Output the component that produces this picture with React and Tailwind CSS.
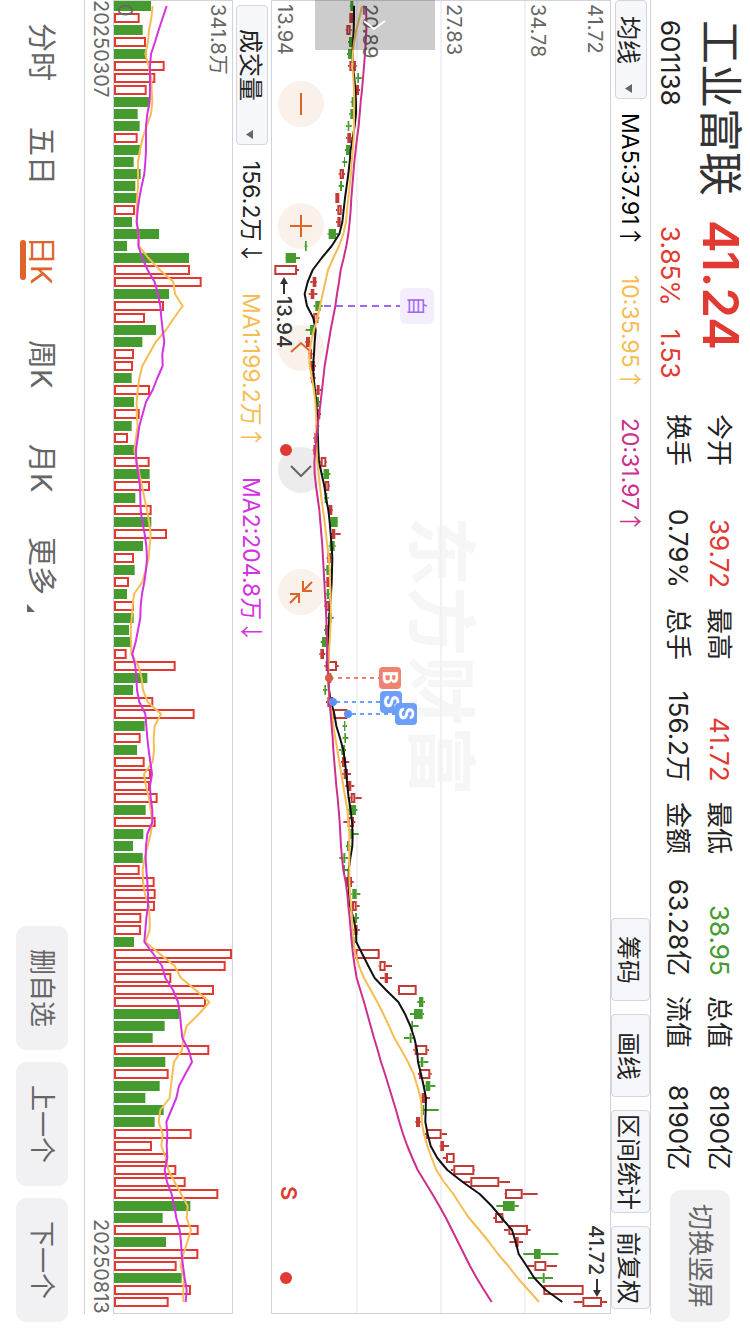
const SLOT = 12
const CHART_LENGTH = 1312

// [direction, low, body start, body end, high] in thirds of a pixel from the price origin
const PRICE_ORIGIN = 516
const CANDLES = [
  ['g', 749, 751, 760, 763], ['r', 748, 748, 760, 760], ['r', 737, 739, 752, 755], ['g', 744, 747, 757, 760],
  ['g', 741, 744, 755, 758], ['r', 744, 748, 768, 770], ['g', 768, 772, 777, 785], ['r', 765, 768, 777, 780],
  ['g', 752, 755, 768, 770], ['g', 748, 751, 759, 762], ['g', 738, 743, 748, 755], ['r', 738, 742, 753, 755],
  ['g', 735, 738, 750, 752], ['g', 727, 732, 735, 742], ['r', 716, 719, 732, 735], ['g', 716, 720, 726, 732],
  ['r', 706, 706, 718, 718], ['r', 708, 712, 725, 727], ['r', 708, 712, 722, 724], ['g', 683, 686, 708, 715],
  ['g', 614, 615, 620, 622], ['g', 556, 557, 588, 600], ['r', 522, 523, 591, 597], ['r', 631, 638, 649, 651],
  ['r', 626, 632, 643, 652], ['g', 641, 646, 662, 668], ['r', 638, 640, 655, 658], ['g', 617, 630, 645, 648],
  ['r', 616, 618, 630, 635], ['r', 624, 626, 636, 638], ['r', 627, 630, 645, 648], ['r', 631, 633, 644, 647],
  ['r', 648, 650, 659, 666], ['g', 646, 648, 657, 660], ['r', 650, 652, 660, 663], ['g', 646, 648, 656, 658],
  ['r', 640, 643, 654, 656], ['r', 638, 640, 654, 656], ['r', 655, 662, 679, 681], ['g', 664, 671, 687, 691],
  ['r', 670, 674, 688, 690], ['g', 672, 674, 682, 686], ['r', 683, 686, 697, 699], ['g', 688, 691, 713, 714],
  ['r', 692, 696, 706, 722], ['g', 686, 689, 704, 707], ['r', 680, 682, 693, 695], ['g', 674, 679, 687, 692],
  ['r', 676, 679, 690, 692], ['g', 678, 680, 687, 690], ['r', 673, 675, 688, 692], ['g', 680, 684, 695, 701],
  ['g', 672, 675, 684, 686], ['g', 662, 666, 678, 680], ['r', 658, 661, 672, 676], ['r', 673, 677, 711, 716],
  ['g', 680, 684, 694, 700], ['g', 669, 673, 678, 682], ['r', 678, 682, 700, 704], ['r', 692, 698, 742, 750],
  ['g', 728, 732, 736, 741], ['g', 728, 733, 738, 745], ['g', 717, 724, 735, 738], ['r', 723, 726, 738, 748],
  ['r', 726, 731, 744, 753], ['r', 736, 743, 754, 763], ['r', 747, 752, 766, 785], ['g', 742, 746, 768, 772],
  ['r', 730, 743, 762, 766], ['g', 748, 751, 760, 776], ['g', 738, 741, 748, 752], ['g', 718, 730, 736, 745],
  ['g', 728, 730, 735, 745], ['r', 735, 738, 756, 761], ['g', 754, 757, 770, 781], ['r', 746, 756, 770, 779],
  ['g', 760, 765, 771, 777], ['r', 755, 763, 773, 779], ['g', 754, 757, 764, 768], ['r', 764, 766, 839, 840],
  ['r', 836, 838, 857, 876], ['r', 840, 854, 864, 876], ['r', 893, 894, 950, 951], ['g', 952, 957, 970, 975],
  ['g', 930, 942, 968, 972], ['g', 930, 934, 939, 956], ['g', 912, 929, 935, 944], ['r', 940, 944, 982, 987],
  ['g', 957, 962, 970, 985], ['r', 954, 957, 991, 995], ['g', 972, 977, 991, 1006], ['r', 962, 965, 976, 990],
  ['g', 965, 968, 972, 1016], ['r', 946, 948, 960, 962], ['r', 975, 978, 1025, 1041], ['r', 1019, 1021, 1032, 1047],
  ['r', 1028, 1038, 1064, 1065], ['r', 1053, 1060, 1123, 1125], ['r', 1087, 1111, 1198, 1230], ['r', 1214, 1215, 1268, 1313],
  ['g', 1189, 1209, 1244, 1256], ['r', 1180, 1185, 1210, 1212], ['r', 1212, 1225, 1284, 1292], ['r', 1228, 1246, 1256, 1269],
  ['g', 1270, 1302, 1322, 1375], ['r', 1282, 1303, 1339, 1371], ['g', 1284, 1328, 1334, 1359], ['r', 1329, 1330, 1451, 1451],
  ['r', 1421, 1447, 1506, 1521],
]

const MA5 = [
  762, 762, 761, 759, 757, 758, 763, 766, 768, 768, 764, 758, 752, 749, 745, 740, 735, 731, 727, 718, 695, 665, 638,
  623, 614, 621, 640, 647, 644, 642, 639, 641, 645, 649, 651, 652, 654, 655, 657, 665, 673, 678, 685, 689, 692, 695,
  697, 696, 695, 693, 690, 688, 686, 684, 682, 683, 685, 687, 693, 703, 709, 720, 730, 735, 739, 742, 746, 752, 756,
  758, 757, 751, 746, 746, 747, 750, 760, 768, 769, 787, 805, 824, 858, 895, 915, 931, 943, 951, 954, 963, 971, 978,
  977, 976, 983, 992, 1012, 1042, 1088, 1139, 1175, 1205, 1236, 1247, 1256, 1280, 1303, 1337, 1387,
]
const MA10 = [
  786, 778, 769, 762, 758, 757, 760, 762, 763, 762, 762, 761, 758, 755, 753, 749, 745, 741, 738, 730, 717, 700, 684,
  676, 668, 660, 652, 642, 633, 628, 629, 636, 642, 646, 648, 649, 649, 650, 652, 656, 660, 664, 669, 674, 678, 682,
  687, 689, 690, 692, 692, 692, 691, 689, 687, 686, 685, 686, 689, 696, 700, 706, 712, 718, 724, 730, 736, 742, 745,
  748, 748, 748, 748, 748, 750, 753, 756, 758, 761, 766, 777, 792, 812, 832, 850, 867, 883, 904, 924, 941, 952, 962,
  965, 965, 972, 982, 995, 1009, 1032, 1060, 1083, 1107, 1138, 1167, 1194, 1225, 1253, 1285, 1317,
]
const MA20 = [
  798, 799, 799, 797, 795, 792, 789, 786, 782, 779, 776, 771, 767, 763, 760, 757, 754, 752, 749, 745, 739, 731, 722,
  717, 711, 706, 699, 692, 686, 680, 674, 670, 666, 662, 657, 653, 649, 646, 643, 644, 648, 653, 658, 661, 664, 667,
  669, 671, 673, 675, 677, 679, 680, 681, 682, 683, 685, 687, 689, 692, 695, 698, 700, 703, 706, 709, 713, 716, 719,
  721, 723, 726, 730, 737, 742, 745, 749, 752, 755, 759, 764, 770, 781, 792, 802, 812, 822, 833, 843, 855, 866, 877,
  888, 898, 909, 922, 937, 953, 975, 997, 1018, 1038, 1056, 1074, 1092, 1110, 1130, 1152, 1175,
]

const VOLUME_ORIGIN = 42
const VOLUMES = [
  153, 119, 128, 138, 140, 194, 166, 140, 150, 113, 119, 113, 121, 101, 122, 106, 112, 105, 96, 177, 81, 267, 270,
  305, 207, 192, 135, 168, 127, 102, 99, 95, 150, 102, 119, 95, 84, 106, 149, 149, 150, 106, 155, 154, 201, 129, 102,
  104, 87, 81, 102, 101, 87, 93, 80, 227, 142, 99, 160, 284, 134, 122, 111, 134, 153, 150, 173, 137, 167, 130, 99,
  128, 119, 164, 167, 165, 124, 123, 102, 396, 377, 214, 342, 318, 238, 194, 158, 328, 196, 206, 179, 136, 191, 164,
  275, 156, 201, 229, 257, 355, 271, 188, 296, 198, 295, 230, 245, 273, 206,
]
const VOLUME_MA1 = [
  158, 154, 147, 144, 136, 146, 154, 155, 157, 153, 140, 128, 120, 114, 114, 114, 111, 110, 110, 116, 117, 145, 180,
  220, 225, 248, 222, 198, 167, 147, 127, 118, 113, 110, 110, 113, 108, 103, 111, 118, 126, 133, 141, 147, 152, 149,
  146, 137, 127, 102, 98, 95, 92, 93, 94, 115, 125, 129, 143, 183, 164, 161, 162, 158, 132, 138, 147, 152, 157, 152,
  143, 134, 128, 129, 135, 147, 149, 149, 136, 180, 224, 243, 287, 328, 297, 260, 250, 246, 222, 217, 213, 209, 181,
  176, 188, 184, 198, 205, 224, 243, 263, 260, 273, 262, 250, 242, 252, 250, 250,
]
const VOLUME_MA2 = [
  200, 188, 176, 165, 153, 150, 150, 150, 149, 142, 138, 138, 138, 136, 133, 125, 118, 113, 110, 116, 115, 127, 143,
  164, 174, 181, 184, 188, 193, 187, 188, 172, 158, 138, 128, 118, 113, 108, 109, 115, 120, 121, 122, 127, 134, 139,
  141, 138, 133, 126, 122, 121, 114, 107, 97, 106, 109, 111, 118, 136, 139, 142, 146, 151, 156, 150, 152, 157, 157,
  142, 138, 137, 139, 142, 144, 144, 139, 136, 133, 160, 186, 196, 219, 234, 240, 243, 247, 266, 276, 256, 237, 229,
  214, 199, 202, 200, 202, 194, 201, 215, 223, 229, 239, 243, 245, 249, 254, 260, 257,
]
const GREEN_VOLUMES = new Set([
  0, 2, 4, 8, 9, 10, 12, 13, 14, 15, 16, 18, 19, 20, 21, 24, 27, 28, 31, 33, 35, 37, 39, 41, 43, 45, 47, 49, 51, 52,
  53, 56, 57, 60, 62, 67, 69, 70, 71, 78, 84, 85, 86, 88, 90, 91, 92, 93, 100, 101, 103, 106,
])

const slotCenter = (i) => 5 + i * SLOT
const scale = (value, origin) => (value - origin) / 3
const linePoints = (values, origin) => values.map((v, i) => `${scale(v, origin)},${slotCenter(i)}`).join(' ')

function Line({ values, origin, color }) {
  return <polyline points={linePoints(values, origin)} fill="none" stroke={color} strokeWidth="2" strokeLinejoin="round" />
}

function Candle({ candle, index }) {
  const [direction, low, start, end, high] = candle
  const y = slotCenter(index)
  const [l, s, e, h] = [low, start, end, high].map((v) => scale(v, PRICE_ORIGIN))
  const color = direction === 'g' ? '#459b2d' : '#c23b36'
  return (
    <g stroke={color} strokeWidth="2">
      <path d={`M${l} ${y}H${s}M${e} ${y}H${h}`} />
      {direction === 'g' ? (
        <rect x={s} y={y - 5} width={e - s} height="10" fill={color} stroke="none" />
      ) : (
        <rect x={s + 1} y={y - 4} width={Math.max(e - s - 2, 1)} height="8" fill="none" />
      )}
    </g>
  )
}

const ICONS = {
  缩小: <path d="M23 12V34" />,
  放大: <path d="M23 12V34M12 23H34" />,
  左移: <path d="M13 27L23 18L33 27" />,
  右移: <path d="M13 19L23 29L33 19" />,
  收起: <path d="M34 13L25 22M25 12V22H34M12 34L21 25M12 25H21V34" />,
}

function ToolButton({ label, muted }) {
  return (
    <button
      aria-label={label}
      className={`size-[46px] rounded-full ${muted ? 'bg-[#ececec] text-[#666666]' : 'bg-[#fbf1eb] text-[#dd6529]'}`}
    >
      <svg viewBox="0 0 46 46" className="size-full" fill="none" stroke="currentColor" strokeWidth="2">
        {ICONS[label]}
      </svg>
    </button>
  )
}

function Caret() {
  return (
    <svg viewBox="0 0 7 9" className="h-[9px] w-[7px]" fill="#666666">
      <path d="M7 0V9L0 4.500Z" />
    </svg>
  )
}

function Arrow({ children }) {
  return <span className="font-['Noto_Sans_CJK_SC',sans-serif]">{children}</span>
}

function Quote({ label, value, tone }) {
  return (
    <div className="flex justify-between">
      <dt>{label}</dt>
      <dd className={tone}>{value}</dd>
    </div>
  )
}

const QUOTES = [
  [['今开', '39.72', 'text-[#e03a32]'], ['换手', '0.79%', '']],
  [['最高', '41.72', 'text-[#e03a32]'], ['总手', '156.2万', '']],
  [['最低', '38.95', 'text-[#459b2d]'], ['金额', '63.28亿', '']],
  [['总值', '8190亿', ''], ['流值', '8190亿', '']],
]

function Header() {
  return (
    <header className="flex w-[99px] shrink-0 pb-3 pt-5">
      <div className="flex h-[394px] shrink-0 flex-col">
        <div className="flex w-[60px] items-center gap-6">
          <h1 className="text-[44px] leading-none text-[#333333]">工业富联</h1>
          <strong className="text-[49px] font-semibold leading-none text-[#e03a32]">41.24</strong>
        </div>
        <div className="flex w-[39px] items-center pr-[2px] text-[26px] leading-none text-[#e03a32]">
          <span className="h-[206px] text-[#222222]">601138</span>
          <span className="h-[103px]">3.85%</span>
          <span>1.53</span>
        </div>
      </div>
      <div className="flex flex-1 gap-5">
        {QUOTES.map((rows) => (
          <dl key={rows[0][0]} className="flex flex-1 flex-col gap-[15px] pr-[18px] text-[26px] leading-none text-[#222222]">
            {rows.map(([label, value, tone]) => (
              <Quote key={label} label={label} value={value} tone={tone} />
            ))}
          </dl>
        ))}
      </div>
      <button className="mr-5 mt-5 h-[132px] w-[60px] rounded-[10px] bg-[#f1f1f4] text-[26px] leading-none text-[#666666]">
        切换竖屏
      </button>
    </header>
  )
}

const smallButton = 'rounded-[4px] border border-[#d5d5dc] bg-[#f6f7fa] pr-[5px] text-2xl leading-none text-[#222222]'

function PriceToolbar() {
  return (
    <div className="flex w-10 shrink-0 items-center border-r border-[#d2d2da] pb-[5px] text-[23px] leading-none">
      <button className={`${smallButton} flex h-[99px] w-8 items-center justify-between pb-[5px] pt-[15px]`}>
        均线
        <Caret />
      </button>
      <span className="mt-[14px] h-[162px] text-black">MA5:37.91<Arrow>↑</Arrow></span>
      <span className="h-[143px] text-[#f5bd54]">10:35.95<Arrow>↑</Arrow></span>
      <span className="text-[#cc2f8c]">20:31.97<Arrow>↑</Arrow></span>
      <div className="mt-auto flex gap-[13px] self-stretch">
        <button className={`${smallButton} h-[83px]`}>筹码</button>
        <button className={`${smallButton} h-[83px]`}>画线</button>
        <button className={`${smallButton} h-[103px]`}>区间统计</button>
        <button className={`${smallButton} h-[83px]`}>前复权</button>
      </div>
    </div>
  )
}

const badge = 'absolute flex size-[22px] items-center justify-center rounded-[4px] text-xl font-bold leading-none text-white'

function PriceChart() {
  return (
    <section aria-label="日K线" className="relative min-w-0 flex-1 border border-[#d2d2da]">
      <div className="absolute left-[133px] top-[515px] text-[70px] font-bold leading-none text-[#f6f6f7]">东方财富</div>
      <div className="absolute left-[6px] top-[80px] flex gap-[76px]">
        <ToolButton label="缩小" />
        <ToolButton label="放大" />
        <ToolButton label="左移" />
        <ToolButton label="右移" muted />
        <ToolButton label="收起" />
      </div>
      <svg
        viewBox={`0 0 338 ${CHART_LENGTH}`}
        preserveAspectRatio="none"
        className="pointer-events-none absolute inset-0 size-full"
      >
        <path d="M85 0V1312M169 0V1312M253 0V1312" stroke="#f0f0f5" strokeWidth="2" />
        {CANDLES.map((candle, i) => (
          <Candle key={i} candle={candle} index={i} />
        ))}
        <Line values={MA5} origin={PRICE_ORIGIN} color="#111111" />
        <Line values={MA10} origin={PRICE_ORIGIN} color="#f5bd54" />
        <Line values={MA20} origin={PRICE_ORIGIN} color="#cc2f8c" />
        <path d="M52 305H128" stroke="#a066f5" strokeWidth="2" strokeDasharray="7 5" />
        <path d="M66 677H107" stroke="#ef7d6c" strokeWidth="2" strokeDasharray="4 4" />
        <path d="M64 701H108M80 713H123" stroke="#6d9ffa" strokeWidth="2" strokeDasharray="4 4" />
        <circle cx="57" cy="677" r="4" fill="#dd5a44" />
        <circle cx="61" cy="701" r="4" fill="#5c92f7" />
        <circle cx="76" cy="713" r="4" fill="#5c92f7" />
        <circle cx="14" cy="449" r="6" fill="#e03a32" />
        <circle cx="14" cy="1277" r="6" fill="#e03a32" />
        <path d="M12 293V280M325 1278V1290" stroke="#333333" strokeWidth="2" />
        <path d="M12 276L8 283H16ZM325 1296L321 1289H329Z" fill="#333333" />
      </svg>
      <div className="absolute left-0 top-[295px] text-xl font-medium leading-6 text-[#333333]">13.94</div>
      <div className="absolute left-[312px] top-[1224px] text-xl font-medium leading-6 text-[#333333]">41.72</div>
      <div className="absolute left-[5px] top-[1185px] text-[22px] font-semibold leading-6 text-[#e03a32]">S</div>
      <div className="absolute left-[128px] top-[287px] flex h-9 w-[34px] items-center justify-center rounded-[6px] bg-[#f3edfe] pr-[2px] text-xl leading-none text-[#a066f5]">
        自
      </div>
      <div className={`${badge} left-[107px] top-[666px] bg-[#f08272]`}>B</div>
      <div className={`${badge} left-[108px] top-[690px] bg-[#6d9ffa]`}>S</div>
      <div className={`${badge} left-[123px] top-[702px] bg-[#6d9ffa]`}>S</div>
      <div className="text-xl leading-6 text-[#666666]">
        <span className="absolute left-[1px] top-[3px]">13.94</span>
        <span className="absolute left-[86px] top-[3px]">20.89</span>
        <span className="absolute left-[170px] top-[3px]">27.83</span>
        <span className="absolute left-[254px] top-[3px]">34.78</span>
        <span className="absolute left-[311px] top-[3px]">41.72</span>
      </div>
      <button aria-label="展开" className="absolute -top-px left-[43px] h-[50px] w-[120px] bg-black/20">
        <svg viewBox="0 0 120 50" className="size-full" fill="none" stroke="#ffffff" strokeWidth="2">
          <path d="M49 21L59 29L70 21" />
        </svg>
      </button>
    </section>
  )
}

function VolumeToolbar() {
  return (
    <div className="flex w-[38px] shrink-0 items-center text-[23px] leading-none">
      <button className={`${smallButton} mt-[5px] flex h-[140px] w-8 items-center justify-between pb-[5px] pt-[23px]`}>
        成交量
        <Caret />
      </button>
      <span className="mt-4 h-[132px] pr-[2px] text-[#222222]">156.2万<Arrow>↓</Arrow></span>
      <span className="h-[184px] pr-[2px] text-[#f5bd54]">MA1:199.2万<Arrow>↑</Arrow></span>
      <span className="pr-[2px] text-[#d234e0]">MA2:204.8万<Arrow>↓</Arrow></span>
    </div>
  )
}

function VolumeChart() {
  return (
    <section aria-label="成交量" className="relative w-[120px] shrink-0 border border-[#d2d2da]">
      <svg viewBox={`0 0 118 ${CHART_LENGTH}`} preserveAspectRatio="none" className="absolute inset-0 size-full">
        {VOLUMES.map((value, i) => {
          const length = scale(value, VOLUME_ORIGIN)
          return GREEN_VOLUMES.has(i) ? (
            <rect key={i} x="0" y={slotCenter(i) - 5} width={length} height="10" fill="#459b2d" />
          ) : (
            <rect
              key={i}
              x="1"
              y={slotCenter(i) - 4}
              width={length - 2}
              height="8"
              fill="none"
              stroke="#e03a32"
              strokeWidth="2"
            />
          )
        })}
        <Line values={VOLUME_MA1} origin={VOLUME_ORIGIN} color="#f5bd54" />
        <Line values={VOLUME_MA2} origin={VOLUME_ORIGIN} color="#d234e0" />
      </svg>
      <div className="text-xl leading-6 text-[#666666]">
        <span className="absolute -left-px top-[3px]">0</span>
        <span className="absolute right-[2px] top-[3px]">341.8万</span>
      </div>
    </section>
  )
}

const PERIODS = ['分时', '五日', '日K', '周K', '月K']
const periodButton = 'relative flex w-11 items-center justify-center'

function Footer() {
  return (
    <footer className="flex w-[84px] shrink-0 items-center justify-between pb-3">
      <nav className="flex text-[29px] leading-none text-[#666666]">
        {PERIODS.map((period) => {
          const active = period === '日K'
          return (
            <button
              key={period}
              aria-current={active ? 'page' : undefined}
              className={`${periodButton} h-[104px] pr-[2px] ${active ? 'text-[#dd6529]' : ''}`}
            >
              {period}
              {active && <span className="absolute left-0 top-8 h-10 w-[6px] rounded-full bg-[#dd6529]" />}
            </button>
          )
        })}
        <button className={`${periodButton} h-[92px] pr-[2px]`}>
          更多
          <svg viewBox="0 0 8 8" className="absolute bottom-0 left-[7px] size-2" fill="#666666">
            <path d="M0 0V8H8Z" />
          </svg>
        </button>
      </nav>
      <div className="flex gap-3 text-[26px] leading-none text-[#666666]">
        <button className="h-[124px] w-[52px] rounded-[10px] bg-[#f1f1f4]">删自选</button>
        <button className="h-[124px] w-[52px] rounded-[10px] bg-[#f1f1f4]">上一个</button>
        <button className="h-[124px] w-[52px] rounded-[10px] bg-[#f1f1f4]">下一个</button>
      </div>
    </footer>
  )
}

export default function App() {
  return (
    <div className="flex h-screen w-full flex-col overflow-hidden bg-white font-['Inter','Noto_Sans_CJK_SC',sans-serif] [text-orientation:sideways] [writing-mode:vertical-rl]">
      <Header />
      <main className="flex min-w-0 flex-1 flex-col pb-5">
        <PriceToolbar />
        <PriceChart />
        <VolumeToolbar />
        <VolumeChart />
        <div className="flex w-[29px] shrink-0 items-center justify-between border-l border-[#d2d2da] pl-[3px] text-xl leading-none text-[#666666]">
          <time dateTime="2025-03-07">20250307</time>
          <time dateTime="2025-08-13">20250813</time>
        </div>
      </main>
      <Footer />
    </div>
  )
}
